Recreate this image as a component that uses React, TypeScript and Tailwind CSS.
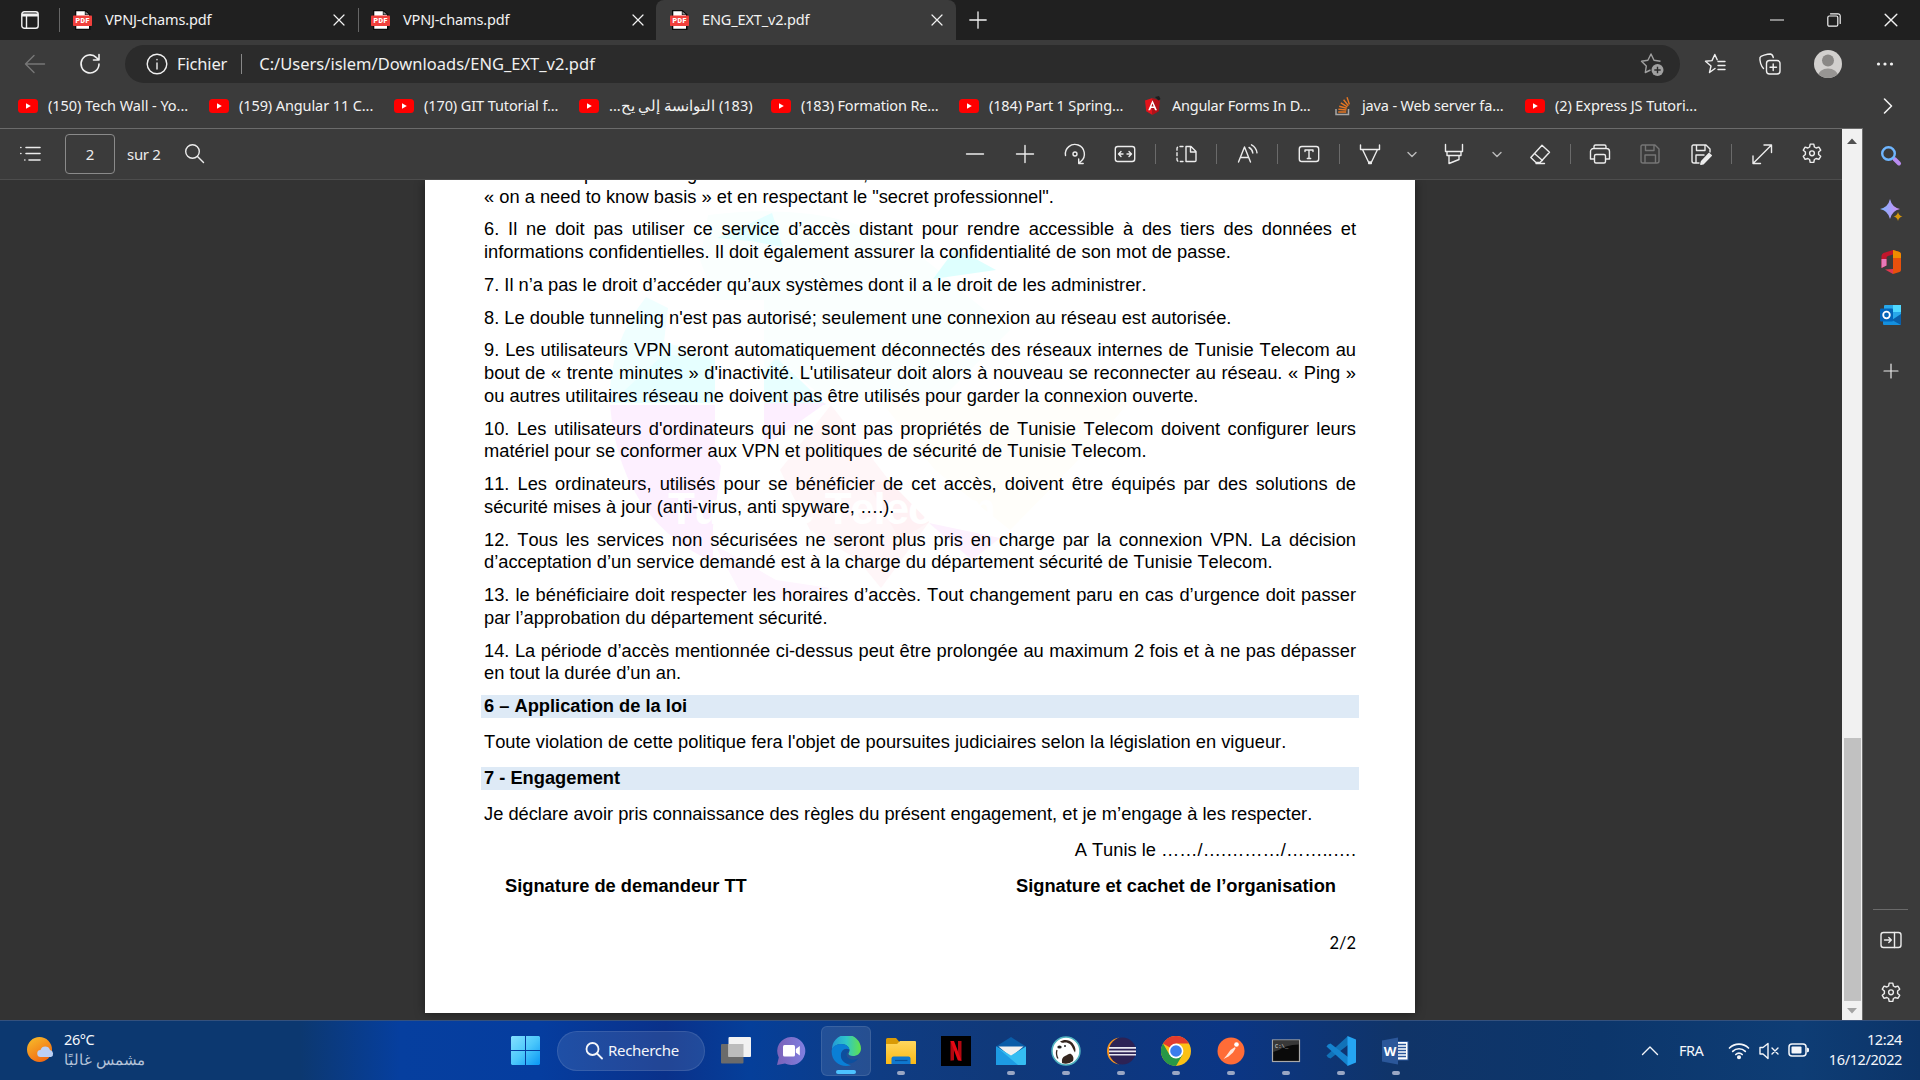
import React from "react";

type P = { children: React.ReactNode; className?: string; box?: string; w?: number };

/* Thin line icon on a 24px grid */
function Ic({ children, className = "size-6", box = "0 0 24 24", w = 1.4 }: P) {
  return (
    <svg viewBox={box} className={`shrink-0 ${className}`} fill="none" stroke="currentColor" strokeWidth={w} strokeLinecap="round" strokeLinejoin="round">
      {children}
    </svg>
  );
}

const gearPath =
  "M10.2 2.1h3.6l.6 2.9 1.7 1 2.8-.9 1.8 3.1-2.1 1.9v2.300l2.100 1.900-1.800 3.100-2.800-.9-1.700 1-.6 2.900h-3.600l-.6-2.900-1.700-1-2.800.9-1.800-3.100 2.100-1.900v-2.300l-2.100-1.900 1.800-3.100 2.800.9 1.700-1z";

const Gear = () => (
  <Ic>
    <path d={gearPath} />
    <circle cx="12" cy="11.300" r="2.400" />
  </Ic>
);

const Cross = ({ className = "size-3" }: { className?: string }) => (
  <Ic className={className} box="0 0 12 12" w={1.2}>
    <path d="M1 1l10 10M11 1L1 11" />
  </Ic>
);

const PdfIcon = () => (
  <svg viewBox="0 0 19 20" className="h-5 w-[19px] shrink-0">
    <path d="M2 0h10.500l5 4.500V20H2z" fill="#0a0a0a" />
    <path d="M3.300 1.200h8.500V5h4.200v13.800H3.300z" fill="#fff" />
    <path d="M12.500 1.500L16 4.500h-3.500z" fill="#8b8b8b" />
    <rect y="5.500" width="19" height="10.500" rx=".8" fill="#f0403c" />
    <text x="9.700" y="13.300" fontSize="7" fontWeight="900" fill="#fff" textAnchor="middle" fontFamily="Roboto, sans-serif" letterSpacing=".5">PDF</text>
  </svg>
);

const YouTube = () => (
  <svg viewBox="0 0 20 16" className="h-4 w-5 shrink-0">
    <rect y="1" width="20" height="14" rx="3.500" fill="#f00" />
    <path d="M8 5.200v5.600l4.800-2.800z" fill="#fff" />
  </svg>
);

const Angular = () => (
  <svg viewBox="0 0 16 20" className="h-5 w-4 shrink-0">
    <path d="M7.500 2L0 4.600l1.200 10.600L7.500 19z" fill="#e3131b" />
    <path d="M7.500 2L15 4.600l-1.200 10.600L7.500 19z" fill="#b40f16" />
    <path d="M7.500 4.300L3.200 14.300h1.900l1-2.400h3l1 2.400h1.900zM7.500 7.500l1.100 2.900H6.400z" fill="#fff" />
    <path d="M10 1l4-1 1.500 3-2 1.500z" fill="#1c1c1c" />
  </svg>
);

const Stack = () => (
  <svg viewBox="0 0 16 20" className="h-5 w-4 shrink-0" fill="none">
    <path d="M1 13v5.500h12.500V13" stroke="#a8a8a8" strokeWidth="1.500" />
    <path d="M3.200 16h8M3.400 13.200l8 .8M4.200 10.200l7.500 2M5.800 6.800l6.600 4M8.600 3.800l4.800 6M12 1.200l2.400 7.200" stroke="#e87722" strokeWidth="1.400" />
  </svg>
);

function Tab({ title, className }: { title: string; className: string }) {
  return (
    <div className={`flex h-10 items-center ${className}`}>
      <PdfIcon />
      <span className="ml-[13px] flex-1 text-[14.5px] tracking-[-0.15px] whitespace-nowrap">{title}</span>
      <Cross />
    </div>
  );
}

const bookmarks = [
  { icon: "yt", t: "(150) Tech Wall - Yo...", c: "w-[191px] tracking-[-0.05px]" },
  { icon: "yt", t: "(159) Angular 11 C...", c: "w-[185px] tracking-[-0.1px]" },
  { icon: "yt", t: "(170) GIT Tutorial f...", c: "w-[185px] tracking-[-0.1px]" },
  { icon: "yt", t: "(183) التوانسة إلي يح...", c: "w-[192px] tracking-[-0.3px]", rtl: true },
  { icon: "yt", t: "(183) Formation Re...", c: "w-[188px] tracking-[-0.15px]" },
  { icon: "yt", t: "(184) Part 1 Spring...", c: "w-[186px] tracking-[-0.15px]" },
  { icon: "ng", t: "Angular Forms In D...", c: "w-[190px] tracking-[-0.25px]" },
  { icon: "so", t: "java - Web server fa...", c: "w-[190px] tracking-[-0.15px]" },
  { icon: "yt", t: "(2) Express JS Tutori...", c: "w-[190px] tracking-[-0.1px]" },
];

const Sep = ({ className }: { className: string }) => <i className={`h-5 w-px shrink-0 bg-[#6a6a6a] ${className}`} />;

const J = "[text-align-last:justify]";

const lines: { t: string; h: string; c?: string }[] = [
  { t: "« on a need to know basis » et en respectant le \"secret professionnel\".", h: "h-8" },
  { t: "6. Il ne doit pas utiliser ce service d’accès distant pour rendre accessible à des tiers des données et", h: "h-[23px]", c: J },
  { t: "informations confidentielles. Il doit également assurer la confidentialité de son mot de passe.", h: "h-[33px]" },
  { t: "7. Il n’a pas le droit d’accéder qu’aux systèmes dont il a le droit de les administrer.", h: "h-[33px]" },
  { t: "8. Le double tunneling n'est pas autorisé; seulement une connexion au réseau est autorisée.", h: "h-8" },
  { t: "9. Les utilisateurs VPN seront automatiquement déconnectés des réseaux internes de Tunisie Telecom au", h: "h-[23px]", c: J },
  { t: "bout de « trente minutes » d'inactivité. L'utilisateur doit alors à nouveau se reconnecter au réseau. « Ping »", h: "h-[23px]", c: J },
  { t: "ou autres utilitaires réseau ne doivent pas être utilisés pour garder la connexion ouverte.", h: "h-[33px]" },
  { t: "10. Les utilisateurs d'ordinateurs qui ne sont pas propriétés de Tunisie Telecom doivent configurer leurs", h: "h-[22px]", c: J },
  { t: "matériel pour se conformer aux VPN et politiques de sécurité de Tunisie Telecom.", h: "h-[33px]" },
  { t: "11. Les ordinateurs, utilisés pour se bénéficier de cet accès, doivent être équipés par des solutions de", h: "h-[23px]", c: J },
  { t: "sécurité mises à jour (anti-virus, anti spyware, ….).", h: "h-[33px]" },
  { t: "12. Tous les services non sécurisées ne seront plus pris en charge par la connexion VPN. La décision", h: "h-[22px]", c: J },
  { t: "d’acceptation d’un service demandé est à la charge du département sécurité de Tunisie Telecom.", h: "h-[33px]" },
  { t: "13. le bénéficiaire doit respecter les horaires d’accès. Tout changement paru en cas d’urgence doit passer", h: "h-[23px]", c: J },
  { t: "par l’approbation du département sécurité.", h: "h-[33px]" },
  { t: "14. La période d’accès mentionnée ci-dessus peut être prolongée au maximum 2 fois et à ne pas dépasser", h: "h-[22px]", c: J },
  { t: "en tout la durée d’un an.", h: "h-[34px]" },
];

function Watermark() {
  return (
    <svg viewBox="425 180 990 834" className="absolute inset-0 h-[834px] w-[990px]">
      <path d="M708 215Q790 205 850 222Q910 240 960 290L1010 330L940 400H826L776 357L764 377V300H715L700 260z" fill="#fafffe" />
      <path d="M610 403Q608 345 646 297L668 308L664 342H620L664 342L715 357V403z" fill="#f0ffff" />
      <path d="M663 355L715 357V403H611z" fill="#e6ffff" />
      <path d="M764 372L776 357L826 405H764z" fill="#e8ffff" />
      <path d="M717 238L772 213L783 247L750 241z" fill="#e4ffff" />
      <path d="M933 279L956 248L996 270z" fill="#defffe" />
      <path d="M610 405H715V458L721 466L713 527V562Q620 520 610 405z" fill="#fdf0ff" />
      <path d="M764 403H826L778 437L764 446z" fill="#fdefff" />
      <path d="M715 545L776 580L830 588L790 600L740 592z" fill="#fef5fe" />
      <path d="M831 405L891 483L929 522L881 588L858 560L810 530L780 470z" fill="#fff6f8" />
      <path d="M866 480L891 483L929 522L900 540z" fill="#fff1f4" />
      <path d="M929 523L1000 538L972 560z" fill="#fdf1fe" />
      <path d="M880 400H1130Q1100 440 1010 530L935 470z" fill="#fffefa" />
      <text x="668" y="524" fontSize="44" fontWeight="700" fill="#fff" fontFamily="'Liberation Sans', sans-serif" textLength="328">Tunisie Telecom</text>
    </svg>
  );
}

function Page() {
  return (
    <div className="relative ml-[425px] h-[833px] w-[990px] overflow-hidden bg-white font-['Liberation_Sans',sans-serif] text-[18.3px] leading-[23px] text-black [font-kerning:none] shadow-[0_0_10px_rgba(0,0,0,.45)]">
      <Watermark />
      <div className="relative ml-[59px] w-[872px] whitespace-nowrap">
        <div className="-mt-[18px] flex h-[23px]">
          <span className="w-[100px]">5. Il doit être</span>
          <span className="w-[103px]">permis de</span>
          <span className="w-[176px]">garder les données</span>
          <span>,</span>
        </div>
        {lines.map((l) => (
          <p key={l.t} className={`${l.h} ${l.c ?? ""}`}>{l.t}</p>
        ))}
        <h2 className="-ml-[3px] h-[23px] w-[878px] bg-[#deeaf6] pl-[3px] leading-[22px] font-bold">6 – Application de la loi</h2>
        <p className="mt-3 h-[37px]">Toute violation de cette politique fera l'objet de poursuites judiciaires selon la législation en vigueur.</p>
        <h2 className="-ml-[3px] h-[23px] w-[878px] bg-[#deeaf6] pl-[3px] leading-[22px] font-bold">7 - Engagement</h2>
        <p className="mt-3 h-9">Je déclare avoir pris connaissance des règles du présent engagement, et je m’engage à les respecter.</p>
        <p className="h-9 text-right">A Tunis le ……/….………/……..….</p>
        <div className="flex h-[58px] justify-between pr-5 pl-[21px] font-bold">
          <span>Signature de demandeur TT</span>
          <span>Signature et cachet de l’organisation</span>
        </div>
        <p className="text-right font-[Lato,sans-serif] text-[16.5px]">2/2</p>
      </div>
    </div>
  );
}

function TabStrip() {
  return (
    <div className="flex h-10 items-center bg-[#202020] text-[#f2f2f2]">
      <svg viewBox="0 0 18 18" className="ml-[21px] size-[18px]" fill="none" stroke="currentColor" strokeWidth="1.400">
        <rect x=".8" y=".8" width="16.400" height="16.400" rx="2.500" />
        <path d="M1 2.500h16v3H1z" fill="currentColor" stroke="none" />
        <path d="M5.500 5v12" />
      </svg>
      <i className="ml-5 h-6 w-px bg-[#666]" />
      <Tab title="VPNJ-chams.pdf" className="ml-[13px] w-[272px]" />
      <i className="ml-[13px] h-6 w-px bg-[#666]" />
      <Tab title="VPNJ-chams.pdf" className="ml-3 w-[273px]" />
      <div className="ml-3 w-[300px] rounded-t-lg bg-[#3b3b3b]">
        <Tab title="ENG_EXT_v2.pdf" className="ml-3.5 w-[273px]" />
      </div>
      <Ic className="ml-[13px] size-[18px]" box="0 0 18 18" w={1.3}><path d="M9 .8v16.400M.8 9h16.400" /></Ic>
      <div className="ml-auto flex items-center pr-[22px]">
        <Ic className="size-3.5" box="0 0 14 14" w={1.2}><path d="M.5 7h13" /></Ic>
        <Ic className="ml-[43px] size-3.5" box="0 0 14 14" w={1.2}>
          <rect x=".8" y="3" width="10" height="10.200" rx="1.500" />
          <path d="M3.500 .8h7.500a2.200 2.200 0 0 1 2.200 2.200v7.500" />
        </Ic>
        <Cross className="ml-[43px] size-3.5" />
      </div>
    </div>
  );
}

function AddressBar() {
  return (
    <div className="flex h-12 items-center text-[#f0f0f0]">
      <Ic className="ml-[23px] size-6 text-[#777]"><path d="M21.500 12H2.500M11 3.500L2.500 12l8.500 8.500" /></Ic>
      <Ic className="ml-[31px] size-6" w={1.6}><path d="M21 12a9 9 0 1 1-2.600-6.400L21 8M21 2.500V8h-5.500" /></Ic>
      <div className="ml-[23px] flex h-[38px] w-[1555px] items-center rounded-full bg-[#2b2b2b]">
        <Ic className="ml-5 size-6"><circle cx="12" cy="12" r="9.800" /><path d="M12 11v6M12 7.500v.3" /></Ic>
        <span className="ml-2 text-[16.5px] tracking-[-0.15px]">Fichier</span>
        <i className="ml-3.5 h-5 w-px bg-[#888]" />
        <span className="ml-[17px] text-[16.5px]">C:/Users/islem/Downloads/ENG_EXT_v2.pdf</span>
        <svg viewBox="0 0 24 24" className="mr-4 ml-auto size-6 text-[#a0a0a0]" fill="none" stroke="currentColor" strokeWidth="1.400" strokeLinejoin="round">
          <path d="M11 20l-5.200 2.500 1-6.400L2 11.300l6.400-1L11.500 4l3 6.300 6.500 1" transform="translate(-.5 -2)" />
          <circle cx="17.500" cy="18" r="6" fill="currentColor" stroke="none" />
          <path d="M17.500 14.800v6.400M14.300 18h6.400" stroke="#2b2b2b" />
        </svg>
      </div>
      <Ic className="ml-[23px] size-6"><path d="M12 16.500l-5.500 4L8 14 2.500 9.300l6.500-.7L11.800 2.500l2.400 5.300M15 9.500h7M15 13.500h7M15 17.500h7" /></Ic>
      <Ic className="ml-[31px] size-6"><rect x="8.500" y="8.500" width="13.500" height="13.500" rx="3" /><path d="M15.200 12v6.500M12 15.300h6.500M5.500 16.500C3 14 1.500 9 2 5.500 2.500 4 9 2 12.500 2c1.500.3 2.500 2 2.800 3.500" /></Ic>
      <svg viewBox="0 0 28 28" className="ml-8 size-7">
        <defs><clipPath id="av"><circle cx="14" cy="14" r="14" /></clipPath></defs>
        <g clipPath="url(#av)"><rect width="28" height="28" fill="#d2d0ce" /><circle cx="14" cy="10.500" r="6" fill="#8a8886" /><ellipse cx="14" cy="26" rx="10" ry="7.500" fill="#979593" /></g>
      </svg>
      <svg viewBox="0 0 18 4" className="ml-[34px] h-1 w-[18px]" fill="currentColor"><circle cx="2.500" cy="2" r="1.600" /><circle cx="9" cy="2" r="1.600" /><circle cx="15.500" cy="2" r="1.600" /></svg>
    </div>
  );
}

function Bookmarks() {
  return (
    <div className="flex h-10 items-center pb-1 pl-[18px] text-[14.5px] text-[#f2f2f2]">
      {bookmarks.map((b) => (
        <div key={b.t} className={`flex shrink-0 items-center whitespace-nowrap ${b.c}`}>
          {b.icon === "yt" ? <YouTube /> : b.icon === "ng" ? <Angular /> : <Stack />}
          <span dir={b.rtl ? "rtl" : "ltr"} className={b.icon === "yt" ? "ml-2.5" : "ml-[11px]"}>{b.t}</span>
        </div>
      ))}
      <Ic className="mr-[22px] ml-auto size-5" box="0 0 20 20" w={1.6}><path d="M6.500 3l7 7-7 7" /></Ic>
    </div>
  );
}

function PdfToolbar() {
  return (
    <div className="flex h-[51px] items-center border-b border-[#4d4d4d] bg-[#3b3b3b] text-[#ececec]">
      <Ic className="ml-[18px] size-6" w={1.6}><path d="M8 5.500h14M8 11.500h14M11 18h11M2.800 5.500h.1M2.800 11.500h.1M6.800 18h.1" /></Ic>
      <div className="ml-[23px] flex h-10 w-[50px] items-center justify-center rounded-sm border border-[#8a8a8a] text-[15px]">2</div>
      <span className="ml-3 w-[55px] text-[15px] tracking-[-0.3px]">sur 2</span>
      <Ic><circle cx="10.500" cy="9.500" r="6.800" /><path d="M15.500 14.500l6 6" /></Ic>
      <Ic className="ml-[757px] size-6"><path d="M3.500 12h17" /></Ic>
      <Ic className="ml-[26px] size-6"><path d="M3.500 12h17M12 3.500v17" /></Ic>
      <Ic className="ml-[26px] size-6"><circle cx="12" cy="12" r="2" /><path d="M2.500 13.500A9.500 9.500 0 1 1 18 19.200L16 21M15.700 17v4.500h4.500" /></Ic>
      <Ic className="ml-[26px] size-6"><rect x="2.300" y="4.500" width="19.400" height="15" rx="2.500" /><path d="M5.500 12h4.500M14 12h4.500M8 9.500L5.500 12 8 14.500M16 9.500l2.500 2.500-2.500 2.500" /></Ic>
      <Sep className="ml-[18px]" />
      <Ic className="ml-[18px] size-6"><path d="M12 4.500h5l5 5v9a1 1 0 0 1-1 1h-9zM16.500 4.700V10H22" /><path d="M9 4.500H5a2 2 0 0 0-2 2v11a2 2 0 0 0 2 2h4" strokeDasharray="3 2.500" /></Ic>
      <Sep className="ml-[18px]" />
      <Ic className="ml-[19px] size-6"><path d="M2.500 20L8.500 5l6 15M4.500 15.500h8M13 5.500c2 1 3.500 3 3.800 5.500M15.500 2.800c3 1.500 5 4.500 5.500 8" /></Ic>
      <Sep className="ml-[17px]" />
      <Ic className="ml-[19px] size-6"><rect x="2.300" y="4.500" width="19.400" height="15" rx="2.500" /><path d="M8 9.500V8h8v1.500M12 8v8.500M10.300 16.500h3.400" /></Ic>
      <Sep className="ml-[18px]" />
      <Ic className="ml-[18px] size-6"><path d="M2.500 3v4.500h19V3M4.500 7.500L10.500 20h3l6-12.500M10.700 20v1.500h2.600V20" /></Ic>
      <Ic className="ml-6 size-3 text-[#bbb]" box="0 0 12 12"><path d="M2 4.500l4 4 4-4" /></Ic>
      <Ic className="ml-6 size-6"><path d="M3.500 2.500v7h17v-7M5 9.500v4h14v-4M7 13.500v8l10-4v-4" /></Ic>
      <Ic className="ml-[25px] size-3 text-[#bbb]" box="0 0 12 12"><path d="M2 4.500l4 4 4-4" /></Ic>
      <Ic className="ml-[25px] size-6"><path d="M14 3.200l7.500 7L12 20.500H8L2.800 15.500zM6.500 11.500l8 7M8 21.500h8.500" /></Ic>
      <Sep className="ml-[18px]" />
      <Ic className="ml-[17px] size-6"><path d="M6 6V4.500A1.500 1.500 0 0 1 7.500 3h9A1.500 1.500 0 0 1 18 4.500V6M6 17H2.500V9.500a3 3 0 0 1 3-3h13a3 3 0 0 1 3 3V17H18" /><rect x="6.500" y="12.500" width="11" height="8.500" rx="1.500" /></Ic>
      <Ic className="ml-[26px] size-6 text-[#757575]"><path d="M4 3h13l4 4v12a2 2 0 0 1-2 2H5a2 2 0 0 1-2-2V4zM7.500 3v5.500h8.500V3M7 21v-8h10.500v8" /></Ic>
      <Ic className="ml-[27px] size-6"><path d="M10 21H5a2 2 0 0 1-2-2V4l1-1h13l4 4v3M7.500 3v5.500h8.500V3M7 21v-8h8" /><path d="M12.500 19.500l7.500-8 2.300 2-8 8.200-2.500.5z" fill="currentColor" /></Ic>
      <Sep className="ml-[18px]" />
      <Ic className="ml-[18px] size-6"><path d="M14 3h7.500v7.500M21.500 3l-18 18M3 14v7.500h7.500" /></Ic>
      <span className="ml-[26px]"><Gear /></span>
    </div>
  );
}

function EdgeSidebar() {
  return (
    <div className="flex w-[57px] shrink-0 flex-col items-center bg-[#3b3b3b] pt-[17px] pr-0.5 text-[#ececec]">
      <svg viewBox="0 0 22 22" className="size-[22px]" fill="none">
        <path d="M14.500 14l4.500 4.500" stroke="#b98cf0" strokeWidth="4" strokeLinecap="round" />
        <circle cx="8.500" cy="8.500" r="6.300" stroke="#6fb6ff" strokeWidth="2.400" />
      </svg>
      <svg viewBox="0 0 24 24" className="mt-[31px] size-6">
        <defs><linearGradient id="sp"><stop stopColor="#7db6ff" /><stop offset="1" stopColor="#d08cf5" /></linearGradient></defs>
        <path d="M11 1q1.800 8.200 10 10-8.200 1.800-10 10-1.800-8.200-10-10 8.200-1.800 10-10z" fill="url(#sp)" />
        <path d="M19 14q.9 3.600 4.500 4.500-3.600.9-4.500 4.500-.9-3.600-4.500-4.500 3.600-.9 4.500-4.500z" fill="#d4960c" />
      </svg>
      <svg viewBox="0 0 22 24" className="mt-7 h-6 w-[22px]">
        <path d="M13 0L3.500 3Q1.500 4 1.500 6.500V18l5-2.500V8q0-1.500 1.500-2l5-1.500z" fill="#c1162c" />
        <path d="M1.500 9v9l5-2.500V9z" fill="#e878b8" />
        <path d="M5 19.500l8 4.500v-5z" fill="#e2384f" />
        <path d="M13 0l6.500 2q1.500.8 1.500 2.500V20q0 1.500-1.500 2L13 24z" fill="#e8500c" />
        <path d="M13 0l6.500 2q1.500.8 1.500 2.500V8h-8z" fill="#f08c00" />
      </svg>
      <svg viewBox="0 0 22 22" className="mt-[30px] size-[22px]">
        <rect x="4" y="1" width="17" height="14" rx="1" fill="#28a8ea" />
        <path d="M13 1h8v7h-8z" fill="#50d9ff" />
        <path d="M3 10l9 6 9-6v10a1 1 0 0 1-1 1H4a1 1 0 0 1-1-1z" fill="#1490df" />
        <path d="M21 10v11l-9-5z" fill="#0a5fa8" />
        <rect x="0" y="4.500" width="13" height="13" rx="1" fill="#0364b8" />
        <circle cx="6.500" cy="11" r="3.300" fill="none" stroke="#fff" strokeWidth="1.800" />
      </svg>
      <Ic className="mt-9 size-[18px]" box="0 0 18 18" w={1.2}><path d="M9 2v14M2 9h14" /></Ic>
      <i className="mt-[529px] h-px w-[35px] bg-[#6a6a6a]" />
      <Ic className="mt-[18px] size-6"><rect x="2" y="4.500" width="20" height="15" rx="2.500" /><path d="M15.500 4.500v15M5.500 12h6.500M9.800 9.500l2.500 2.500-2.500 2.500" /></Ic>
      <span className="mt-[29px]"><Gear /></span>
    </div>
  );
}

function Scrollbar() {
  return (
    <div className="flex w-5 shrink-0 flex-col items-center bg-[#f1f1f1]">
      <svg viewBox="0 0 10 6" className="mt-[9px] h-1.5 w-2.5"><path d="M0 6l5-5.500L10 6z" fill="#505050" /></svg>
      <div className="mt-[594px] h-[263px] w-[17px] bg-[#c1c1c1]" />
      <svg viewBox="0 0 10 6" className="mt-[7px] h-1.5 w-2.5"><path d="M0 0l5 5.500L10 0z" fill="#a3a3a3" /></svg>
    </div>
  );
}

/* Taskbar application logos on a 30px grid */
const apps: { name: string; art: React.ReactNode; dot?: string; active?: boolean }[] = [
  { name: "taskview", art: <><rect x="0" y="8" width="22.500" height="19.500" rx="1" fill="#6b6b6b" /><rect x="7.500" y="1" width="22.500" height="20" rx="1" fill="#f2f2f2" /><rect x="7.500" y="8" width="15" height="13" fill="#bcbcbc" /></> },
  { name: "chat", art: <><path d="M15 1a14 14 0 1 1-6 26.500L1 29l1.800-7.500A14 14 0 0 1 15 1z" fill="url(#ch)" /><rect x="7" y="9" width="12" height="11.500" rx="1.500" fill="#fff" /><path d="M19.800 13l4-3v9.500l-4-3z" fill="#fff" /></> },
  { name: "edge", active: true, dot: "w-5 bg-[#4cc2ff]", art: <><path d="M1 14A14.500 14.500 0 0 1 30 12.500c0 5-4 7.500-8 7.500-3 0-4.500-1-4.500-2.200 0-1 1-1.500 1-3.600C18.500 11 15 8 10.500 8 5 8 1.500 11.500 1 14z" fill="url(#eg)" /><path d="M.6 15C1 10.500 5.500 8 10.500 8c4.500 0 8 3 8 6-4-3.500-9.500 1-8.500 6.500.8 4.500 5 7.500 10 8.800C10 32 .5 26 .6 15z" fill="#0a7fd6" /><path d="M18.500 14c-4-3-9 1.200-8.500 6.500.8 7.500 10.500 10.500 18 1.500-6 3.500-12.500 1-12.500-3.500 0-2.500 2.500-3 3-4.500z" fill="#0d4f9e" /></> },
  { name: "explorer", dot: "w-2 bg-[#9aa7c4]", art: <><path d="M0 3.500A1.500 1.500 0 0 1 1.500 2H10l3 3.500V10H0z" fill="#d99a06" /><path d="M0 8h11l3-3h15a1 1 0 0 1 1 1v22H0z" fill="url(#fo)" /><path d="M5.500 28v-5.500a2 2 0 0 1 2-2h15a2 2 0 0 1 2 2V28z" fill="#0f78d0" /><path d="M9 24.500h12.500" stroke="#0a4f96" strokeWidth="1.200" /></> },
  { name: "netflix", art: <><rect width="30" height="30" fill="#000" /><path d="M9.500 5H13v19.300l-3.500.4z" fill="#b20710" /><path d="M17 5h3.500v19.700L17 24.300z" fill="#b20710" /><path d="M9.500 5H13l7.500 19.700-3.700-.4z" fill="#e50914" /></> },
  { name: "mail", dot: "w-2 bg-[#9aa7c4]", art: <><path d="M0 10.500L15 1l15 9.500v6H0z" fill="#0a5ca8" /><path d="M2.500 10.500h25L15 21z" fill="#f0f0f0" /><path d="M0 10.500L15 19.500l15-9V28a1 1 0 0 1-1 1H1a1 1 0 0 1-1-1z" fill="#35bdf2" /><path d="M0 10.500L22 29H1a1 1 0 0 1-1-1z" fill="#1d9be4" /></> },
  { name: "dbeaver", dot: "w-2 bg-[#9aa7c4]", art: <><circle cx="15" cy="15" r="14" fill="#fff" stroke="#4fb3bf" strokeWidth="1.500" /><path d="M11 27c-.5-4 .5-6 3-7 3-1 4-3 6-2 2.500 1.500 3 4.500 2 7q-5 4-11 2z" fill="#35261f" /><path d="M9 5.500c4-2.500 9.500-2 12.500 1.500 3 4 3.500 7 2.500 9.500-1.500-2-2.500-6-5-8.500-1.500-1-3.500-1.800-5.500-1.500-1.500.5-3 .5-4.500-1z" fill="#35261f" /><ellipse cx="8.500" cy="11" rx="2.200" ry="1.500" fill="#222" /><circle cx="14" cy="10" r="1" fill="#222" /><path d="M6 14C5 17 5.500 20 7 22.500" stroke="#35261f" strokeWidth="1.300" fill="none" /></> },
  { name: "eclipse", dot: "w-2 bg-[#9aa7c4]", art: <><path d="M13 1.500C-3 4-3 26 13 28.500 3.500 24 3.500 6 13 1.500z" fill="#f7941e" /><circle cx="16.500" cy="15" r="13.500" fill="#2c2255" /><path d="M3 11h27v1.800H3zM3 14.500h27v1.800H3zM3 18h27v1.600H3z" fill="#e9e8f2" /></> },
  { name: "chrome", dot: "w-2 bg-[#9aa7c4]", art: <><circle cx="15" cy="15" r="15" fill="#fbc116" /><path d="M15 15L2 7.500A15 15 0 0 1 28 7.500H15z" fill="#e33b2e" /><path d="M2 7.500A15 15 0 0 0 15 30l6.500-11.300L8.500 18.700z" fill="#279847" /><circle cx="15" cy="15" r="7.400" fill="#fff" /><circle cx="15" cy="15" r="5.800" fill="#3b7ded" /></> },
  { name: "postman", dot: "w-2 bg-[#9aa7c4]", art: <><circle cx="15" cy="15" r="13.500" fill="#ff6c37" /><circle cx="20.500" cy="8.500" r="2.300" fill="#fff" /><path d="M19 11l-4.500 3-4 5.500-3 3.500 5-2.500 4.500-4 2.500-4z" fill="#ffe6db" /></> },
  { name: "cmd", dot: "w-2 bg-[#9aa7c4]", art: <><rect x="1.500" y="4" width="27" height="21.500" fill="#0a0a0a" stroke="#a9a9a9" strokeWidth="1.200" /><path d="M2 4.500h26v4Q14 9 8 14L2 16z" fill="#383838" /><text x="4" y="11.500" fontSize="5.500" fill="#ddd" fontFamily="'Liberation Mono', monospace">C:\_</text></> },
  { name: "vscode", dot: "w-2 bg-[#9aa7c4]", art: <><path d="M22 0v9L4.500 22.500 2 21.500.5 19.500z" fill="#1172b8" /><path d="M22 30v-9L4.500 7.500 2 8.500.5 10.500z" fill="#1583ce" /><path d="M21.500 0L30 3.500v23L21.500 30z" fill="#25a4f2" /></> },
  { name: "word", dot: "w-2 bg-[#9aa7c4]", art: <><rect x="15" y="5.500" width="12" height="18.500" fill="#fff" stroke="#2b579a" strokeWidth="1" /><path d="M17 8.500h8M17 11.500h8M17 14.500h8M17 17.500h8M17 20.500h8" stroke="#2b579a" strokeWidth="1.300" /><path d="M1 4.500L17 1.500v27L1 25.500z" fill="#2b579a" /><text x="9" y="19.500" fontSize="13" fontWeight="700" fill="#fff" textAnchor="middle" fontFamily="'Noto Sans', sans-serif">W</text></> },
];

function Taskbar() {
  return (
    <div className="flex h-[60px] items-center border-t border-[#35517d] bg-[linear-gradient(90deg,#0c3870_0,#0c3870_300px,#063f9f_400px,#053d9f_540px,#0a318a_665px,#053f9a_750px,#0f3c83_880px,#10397a_1000px,#0b3685_1230px,#103468_1400px,#0c366b_1600px,#0e3d75_1800px,#0c3468_1920px)] text-[#f4f6fa]">
      <svg viewBox="0 0 28 28" className="ml-[27px] size-7">
        <defs>
          <linearGradient id="sun" x1="0" y1="0" x2=".6" y2="1"><stop stopColor="#f7c02c" /><stop offset="1" stopColor="#f26a12" /></linearGradient>
          <linearGradient id="ch" x1="0" y1="0" x2="1" y2="0"><stop stopColor="#7b62b8" /><stop offset="1" stopColor="#7f7fe0" /></linearGradient>
          <linearGradient id="eg"><stop stopColor="#2299d8" /><stop offset=".5" stopColor="#2fc6c8" /><stop offset="1" stopColor="#62e24a" /></linearGradient>
          <linearGradient id="fo" x1="0" y1="0" x2="0" y2="1"><stop stopColor="#ffd75e" /><stop offset="1" stopColor="#fbb916" /></linearGradient>
          <linearGradient id="wn" x1="0" y1="0" x2="1" y2="1"><stop stopColor="#84e0ff" /><stop offset=".5" stopColor="#4cc8fb" /><stop offset="1" stopColor="#0896f5" /></linearGradient>
        </defs>
        <circle cx="12.500" cy="12.500" r="12.500" fill="url(#sun)" />
        <path d="M14 20a3.500 3.500 0 0 1-.5-7 5 5 0 0 1 9.500 0 3.700 3.700 0 0 1 1 7z" fill="#bcd0f4" />
      </svg>
      <div className="ml-[9px] w-[151px] pb-1 text-[14.5px] leading-5">
        <div className="tracking-[-0.4px]">26°C</div>
        <div className="flex text-[14.5px] text-[#b4c2d8]"><span dir="rtl">مشمس غالبًا</span></div>
      </div>
      <svg viewBox="0 0 29 29" className="ml-[296px] size-[29px]" fill="url(#wn)"><path d="M1 0h13v14H0V1zM15 0h13l1 1v13H15zM0 15h14v14H1l-1-1zM15 15h14v13l-1 1H15z" /></svg>
      <div className="ml-[17px] flex h-10 w-[148px] items-center rounded-full border border-white/10 bg-white/10 text-[15px]">
        <Ic className="ml-[27px] size-[18px]" box="0 0 18 18" w={1.8}><circle cx="7.500" cy="7" r="6" /><path d="M12 11.500l5 5" /></Ic>
        <span className="ml-[5px] tracking-[-0.3px]">Recherche</span>
      </div>
      <div className="ml-[6px] flex gap-[5px]">
        {apps.map((a) => (
          <div key={a.name} className={`relative flex size-[50px] items-center justify-center rounded-md ${a.active ? "border border-white/10 bg-white/10" : ""}`}>
            <svg viewBox="0 0 30 30" className="size-[30px]">{a.art}</svg>
            {a.dot && <i className={`absolute bottom-px h-1 rounded-full ${a.dot}`} />}
          </div>
        ))}
      </div>
      <div className="ml-auto flex items-center pr-[18px]">
        <Ic className="size-[18px]" box="0 0 18 18"><path d="M1.500 12.500L9 5l7.500 7.500" /></Ic>
        <span className="ml-5 w-[27px] text-[14.5px] tracking-[-0.5px]">FRA</span>
        <Ic className="ml-[22px] size-[22px]" box="0 0 22 22" w={1.7}><path d="M1.500 8a13.500 13.500 0 0 1 19 0M4.700 11.300a9 9 0 0 1 12.600 0M7.800 14.500a4.500 4.500 0 0 1 6.400 0" /><circle cx="11" cy="17.300" r="1.200" fill="currentColor" /></Ic>
        <Ic className="ml-2 size-[22px]" box="0 0 22 22"><path d="M2 7.500h3L10 3.500v15L5 14H2zM14 8l6 6M20 8l-6 6" /></Ic>
        <svg viewBox="0 0 22 14" className="mb-0.5 ml-2 h-3.5 w-[22px]" fill="none"><rect x="1" y="1" width="17" height="12" rx="3" stroke="currentColor" strokeWidth="1.500" /><rect x="3.500" y="3.500" width="10" height="7" rx="1" fill="currentColor" /><path d="M19 4.500l2 1v3l-2 1z" fill="currentColor" /></svg>
        <div className="w-[92px] pb-1 text-right text-[14.5px] leading-5 tracking-[-0.4px]">
          <div>12:24</div>
          <div>16/12/2022</div>
        </div>
      </div>
    </div>
  );
}

export default function App() {
  return (
    <div className="flex h-[1080px] w-[1920px] flex-col overflow-hidden bg-[#3b3b3b] font-['Noto_Sans',sans-serif]">
      <TabStrip />
      <AddressBar />
      <Bookmarks />
      <div className="flex h-[892px]">
        <div className="flex w-[1842px] flex-col border-t border-[#6b6b6b]">
          <PdfToolbar />
          <div className="h-[840px] overflow-hidden bg-[#333]">
            <Page />
          </div>
        </div>
        <div className="flex border-t border-r border-[#6b6b6b]">
          <Scrollbar />
        </div>
        <EdgeSidebar />
      </div>
      <Taskbar />
    </div>
  );
}
